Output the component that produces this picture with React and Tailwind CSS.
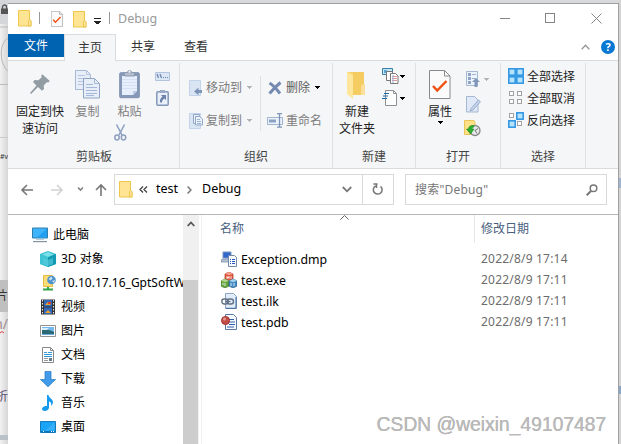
import React from "react";

const UI = "font-['Noto_Sans','Noto_Sans_CJK_SC',sans-serif]";

function Caret({ className = "text-black" }) {
  return (
    <svg className={`block shrink-0 ${className}`} width="5" height="3" viewBox="0 0 5 3" shapeRendering="crispEdges">
      <path d="M0 0h5v1H0zM1 1h3v1H1zM2 2h1v1H2z" fill="currentColor" />
    </svg>
  );
}

function Folder({ w = 14, h = 17 }) {
  return (
    <svg className="block shrink-0" width={w} height={h} viewBox="0 0 14 17">
      <path d="M.5.5h11v9.5l1.5 1v5H.5z" fill="#ffe494" stroke="#eec64b" />
      <path d="M10.5 16V10.5l1.2-1 1.3 1V16z" fill="#ffe89e" stroke="#e9bd3d" strokeWidth=".8" />
    </svg>
  );
}

function PinIcon() {
  return (
    <svg className="block" width="20" height="20" viewBox="0 0 20 20">
      <path d="M12.3.3 19.8 7l-1.600 1.400-1.500-.2-3 3.300.3 3.600-2 1.700L8 13 1 20l-1-.9L6.500 11.500 3 8l1.600-2 3.800.300 3.300-3-.5-1.500z" fill="#929ca3" />
    </svg>
  );
}

function CopyIcon() {
  return (
    <svg className="block" width="25" height="29" viewBox="0 0 25 29">
      <path d="M.5.5h11l4 4v15H.5z" fill="#e8eef8" stroke="#a6b8d3" />
      <path d="M11.5.5v4h4M3 5.5h7M3 8.5h10M3 11.500h10M3 14.500h8" fill="none" stroke="#b4c6e1" />
      <path d="M8.500 8.500h11l5 5v14.500h-16z" fill="#e8eef8" stroke="#8fa4c4" />
      <path d="M19.500 8.500v5h5M11 14.500h7M11 17.500h11M11 20.500h11M11 23.500h11M11 25.500h8" fill="none" stroke="#a4b9da" />
    </svg>
  );
}

function PasteIcon() {
  return (
    <svg className="block" width="21" height="30" viewBox="0 0 21 30">
      <rect x=".7" y="3.700" width="19.600" height="25" rx="1" fill="#8799b8" stroke="#8092b1" />
      <path d="M3 7h15v15l-4 4H3z" fill="#e6effb" />
      <path d="M3 10.500h15M3 13.500h15M3 16.500h15M3 19.500h15" stroke="#d5e1f2" />
      <path d="M14 26v-4h4z" fill="#bccce5" />
      <path d="M5.500 7V3.500h3a2 2 0 0 1 4 0h3V7z" fill="#b5bdcc" stroke="#8998b3" />
      <circle cx="10.500" cy="2.500" r="1" fill="#f5f6f8" />
    </svg>
  );
}

function ScissorsIcon() {
  return (
    <svg className="block" width="13" height="17" viewBox="0 0 13 17" fill="none" stroke="#8da0c1">
      <path d="M2.500.5 8 11M10.500.5 5 11" strokeWidth="1.600" />
      <ellipse cx="3" cy="13.500" rx="2.200" ry="2.400" strokeWidth="1.500" />
      <ellipse cx="9.500" cy="13.500" rx="2.200" ry="2.400" strokeWidth="1.500" />
    </svg>
  );
}

function PathIcon() {
  return (
    <svg className="block" width="15" height="9" viewBox="0 0 15 9">
      <path d="M.5.5h14v8H.5z" fill="#dce7f6" stroke="#b2c3de" />
      <path d="m2 2 1.500 4M5 2l1.500 4" stroke="#6f86ad" strokeWidth="1.300" />
      <path d="M8 5h1v1H8zM10 5h1v1h-1zM12 5h1v1h-1z" fill="#6f86ad" />
    </svg>
  );
}

function PasteLinkIcon() {
  return (
    <svg className="block" width="13" height="16" viewBox="0 0 13 16">
      <rect x=".8" y="1.800" width="11.400" height="13.400" rx="1" fill="#e9f0fa" stroke="#8498b9" strokeWidth="1.500" />
      <path d="M4 0h5v3H4z" fill="#9aaac6" />
      <path d="M5 5h5v5L8.300 8.400C6.500 9.500 6 11 6 12.500H4C3.500 10 4.500 8 6.500 6.700z" fill="#6c83ab" />
    </svg>
  );
}

function MoveIcon() {
  return (
    <svg className="block shrink-0" width="14" height="16" viewBox="0 0 14 16">
      <path d="M.5.5h11v15H.5z" fill="#dae5f4" stroke="#c3d3ea" />
      <path d="M13 10H9.500V7.500L5 11.500l4.500 3.800V13H13z" fill="#7e95ba" />
    </svg>
  );
}

function CopyToIcon() {
  return (
    <svg className="block shrink-0" width="14" height="16" viewBox="0 0 14 16">
      <path d="M.5.5h11v15H.5z" fill="#dae5f4" stroke="#c3d3ea" />
      <path d="M4.500 1.500h6v9h-6z" fill="#eaf1fa" stroke="#93a8c9" />
      <path d="M6.500 3.500h4l3 2.500v6h-7z" fill="#edf3fb" stroke="#93a8c9" />
      <path d="M8 6.500h3M8 8.500h4M8 10.500h4" stroke="#9db1d0" />
    </svg>
  );
}

function DeleteIcon() {
  return (
    <svg className="block shrink-0" width="14" height="14" viewBox="0 0 14 14">
      <path d="M1.500 2C4 3.500 8.500 8 12 12.500M12.500 1.500C9.500 4 5 8.500 1.500 12.500" fill="none" stroke="#748ab0" strokeWidth="3" />
    </svg>
  );
}

function RenameIcon() {
  return (
    <svg className="block shrink-0" width="16" height="15" viewBox="0 0 16 15">
      <path d="M.5 4.500h15v7H.5z" fill="#edf3fb" stroke="#a0b3d0" />
      <path d="M2 6.500h7v3H2z" fill="#8ba0c3" />
      <path d="M10 .7h5M12.500.7v13.500M10 14.200h5" fill="none" stroke="#7e94b9" strokeWidth="1.300" />
    </svg>
  );
}

function NewFolderIcon() {
  return (
    <svg className="block" width="20" height="28" viewBox="0 0 20 28">
      <path d="M3 1h14v12l1 1v10H6L0 21V1z" fill="#f7d168" />
      <path d="M0 1l6 3v24l-6-5z" fill="#ffe69d" />
      <path d="M6 4V1h11v13l1 1v9H6z" fill="#f5cc62" />
      <path d="M14 24V15l2-2 2 2v9z" fill="#fae09a" />
    </svg>
  );
}

function NewItemIcon() {
  return (
    <svg className="block shrink-0" width="17" height="16" viewBox="0 0 17 16">
      <path d="M.5.500h10v6H.5z" fill="#c5e9f9" stroke="#397eaa" />
      <path d="M2 2h3v3H2z" fill="#5aa5d6" />
      <path d="M4.500 3.500h6v9h-6z" fill="#fff" stroke="#777" />
      <path d="M8.500 5.500h5l2.500 2.500v7.500H8.500z" fill="#fff" stroke="#777" />
      <path d="M10 8.500h5M10 10.500h5M10 12.500h5" stroke="#e69a9a" />
      <path d="M11 7v8" stroke="#8dafd8" />
    </svg>
  );
}

function EasyAccessIcon() {
  return (
    <svg className="block shrink-0" width="17" height="16" viewBox="0 0 17 16">
      <path d="M3.500.500h8l3 3v12h-11z" fill="#fff" stroke="#909090" />
      <path d="M11.500.500v3h3" fill="none" stroke="#909090" />
      <path d="M2 3.500h5M1 6h5M0 8.500h5" stroke="#1b6cab" strokeWidth="1.200" />
    </svg>
  );
}

function PropertiesIcon({ w = 22, h = 29 }) {
  return (
    <svg className="block shrink-0" width={w} height={h} viewBox="0 0 22 29">
      <path d="M.5.500h15l5.500 5.500v22.500H.5z" fill="#fbfbfb" stroke="#8a8a8a" />
      <path d="M15.500.500v5.500H21" fill="none" stroke="#8a8a8a" />
      <path d="m4 16 4.200 4.500 9.300-9.500" fill="none" stroke="#f05010" strokeWidth="2.500" />
    </svg>
  );
}

function OpenIcon() {
  return (
    <svg className="block shrink-0" width="14" height="16" viewBox="0 0 14 16">
      <path d="M.5.500h11v14H.5z" fill="#edf3fb" stroke="#a5b7d2" />
      <path d="M2 2h3v3H2zM2 6h3v3H2zM2 10h3v3H2z" fill="#8fa4c6" />
      <path d="M6 3.500h4M6 7.500h4" stroke="#9fb2cf" />
      <path d="m10 7 4 4h-2.500v5h-3v-5H6z" fill="#8096ba" />
    </svg>
  );
}

function EditIcon() {
  return (
    <svg className="block" width="15" height="17" viewBox="0 0 15 17">
      <path d="M.5.500h8l3.500 3.500v12H.5z" fill="#dfe9f7" stroke="#a5b7d2" />
      <path d="m5 12.500 7.500-8.500 2 1.700L7 14l-3 1z" fill="#c4d3e9" stroke="#8fa4c5" strokeWidth=".8" />
    </svg>
  );
}

function HistoryIcon() {
  return (
    <svg className="block" width="17" height="17" viewBox="0 0 17 17">
      <path d="M.5.500h9.500l1 2v12H.5z" fill="#ffe287" stroke="#eac456" />
      <circle cx="11" cy="10.500" r="5" fill="#e8e9eb" stroke="#888" strokeWidth="1.300" />
      <path d="M11 10.500l3-2M11 10.500l2 3" stroke="#555" strokeWidth=".8" />
      <path d="M9.500 5.500C6 5 4.500 7 4.500 9H2.500l4 5 3.500-5H8c0-1.300.700-2 2-2z" fill="#31ae31" stroke="#158b18" strokeWidth=".6" />
    </svg>
  );
}

const SELECTED = { all: [1, 1, 1, 1], none: [0, 0, 0, 0], invert: [0, 1, 1, 0] };
function SelectIcon({ kind }) {
  const pos = [[1, 1], [9, 1], [1, 9], [9, 9]];
  return (
    <svg className="block shrink-0" width="16" height="16" viewBox="0 0 16 16">
      {pos.map(([x, y], i) =>
        SELECTED[kind][i] ? (
          <rect key={i} x={x - 0.2} y={y - 0.2} width="6.400" height="6.400" fill="#b7e2fc" stroke="#2a94e3" strokeWidth="1.500" />
        ) : (
          <rect key={i} x={x + 0.5} y={y + 0.5} width="4" height="4" fill="#fff" stroke="#a2a2a2" />
        )
      )}
    </svg>
  );
}

function Group({ label, width, children }) {
  return (
    <div className={`flex h-[105px] shrink-0 flex-col border-r border-[#dfe0e2] ${width}`}>
      <div className="flex h-[85px] items-start">{children}</div>
      <div className="h-[17px] text-center leading-[17px] text-[#444]">{label}</div>
    </div>
  );
}

function Ribbon() {
  return (
    <div className="flex h-[109px] shrink-0 border-y border-[#dadbdc] bg-[#f5f6f8] pl-px pt-[2px] leading-[17px] text-[#222]">
      <Group label="剪贴板" width="w-[171px]">
        <div className="flex w-[62px] flex-col items-center pt-[11px]">
          <PinIcon />
          <div className="mt-[9px] text-center">固定到快<br />速访问</div>
        </div>
        <div className="flex w-[33px] flex-col items-center pt-[7px] text-[#808080]">
          <CopyIcon />
          <div className="mt-1">复制</div>
        </div>
        <div className="flex w-[51px] flex-col items-center pt-[6px] text-[#808080]">
          <PasteIcon />
          <div className="mt-1">粘贴</div>
          <div className="mr-[18px] mt-1"><ScissorsIcon /></div>
        </div>
        <div className="flex flex-col items-center gap-[9px] pt-[9px]">
          <PathIcon />
          <PasteLinkIcon />
        </div>
      </Group>
      <Group label="组织" width="w-[153px]">
        <div className="flex w-[80px] flex-col gap-[16px] pl-[9px] pt-4 text-[#7c7c7c]">
          <div className="flex h-[17px] items-center"><MoveIcon /><span className="ml-[3px] mr-[5px]">移动到</span><Caret className="text-[#b4b4b4]" /></div>
          <div className="flex h-[17px] items-center"><CopyToIcon /><span className="ml-[3px] mr-[5px]">复制到</span><Caret className="text-[#b4b4b4]" /></div>
        </div>
        <div className="mt-[13px] h-[55px] w-px bg-[#dfe0e2]" />
        <div className="flex flex-col gap-[16px] pl-[6px] pt-4 text-[#7c7c7c]">
          <div className="flex h-[17px] items-center pl-px"><DeleteIcon /><span className="ml-[4px] mr-[5px] text-[#606060]">删除</span><Caret /></div>
          <div className="flex h-[17px] items-center"><RenameIcon /><span className="ml-[3px]">重命名</span></div>
        </div>
      </Group>
      <Group label="新建" width="w-[83px]">
        <div className="flex w-[48px] flex-col items-center pt-[8px]">
          <NewFolderIcon />
          <div className="mt-[4px] whitespace-nowrap text-center">新建<br />文件夹</div>
        </div>
        <div className="flex flex-col gap-[6px] pl-px pt-[5px]">
          <div className="flex items-center gap-[1px]"><NewItemIcon /><Caret /></div>
          <div className="flex items-center gap-[1px]"><EasyAccessIcon /><Caret /></div>
        </div>
      </Group>
      <Group label="打开" width="w-[85px]">
        <div className="flex w-[48px] flex-col items-center pt-[7px]">
          <PropertiesIcon />
          <div className="mb-[1px] mt-[4px]">属性</div>
          <Caret />
        </div>
        <div className="flex flex-col gap-[9px] pl-[2px] pt-[8px]">
          <div className="flex items-center gap-[4px]"><OpenIcon /><Caret className="text-[#b4b4b4]" /></div>
          <EditIcon />
          <div className="-ml-[2px] -mt-[2px]"><HistoryIcon /></div>
        </div>
      </Group>
      <Group label="选择" width="w-[85px]">
        <div className="flex flex-col gap-[6px] pl-[7px] pt-[5px]">
          <div className="flex h-4 items-center gap-[3px]"><SelectIcon kind="all" />全部选择</div>
          <div className="flex h-4 items-center gap-[3px]"><SelectIcon kind="none" />全部取消</div>
          <div className="flex h-4 items-center gap-[3px]"><SelectIcon kind="invert" />反向选择</div>
        </div>
      </Group>
    </div>
  );
}

function TitleBar() {
  return (
    <div className="flex h-[30px] shrink-0 items-center pl-[10px] pr-[11px]">
      <span className="-mt-[2px]"><Folder /></span>
      <span className="-mt-[2px] ml-[7px] h-[12px] w-px bg-[#999]" />
      <span className="ml-[11px]"><PropertiesIcon w={12} h={16} /></span>
      <span className="ml-[10px]"><Folder /></span>
      <svg className="ml-[7px] mt-1 block" width="8" height="7" viewBox="0 0 8 7" shapeRendering="crispEdges">
        <path d="M0 0h7v1H0zM0 3h7v1H0zM1 4h5v1H1zM2 5h3v1H2z" fill="#222" />
      </svg>
      <span className="-mt-[2px] ml-[7px] h-[12px] w-px bg-[#999]" />
      <span className="ml-[8px] text-[12.500px] text-[#999]">Debug</span>
      <div className="-mt-[1px] ml-auto flex items-center text-[#858585]">
        <svg className="block" width="110" height="12" viewBox="0 0 110 12" fill="none" stroke="currentColor">
          <path d="M3 5.500h10M48.500.500h9v9h-9z" shapeRendering="crispEdges" />
          <path d="m94.500.500 10 10M104.500.500l-10 10" />
        </svg>
      </div>
    </div>
  );
}

function Tabs() {
  return (
    <div className="flex h-[26px] shrink-0 text-[#333]">
      <div className="h-[23px] w-[56px] bg-[#0063b1] text-center leading-[23px] text-white">文件</div>
      <div className="z-10 h-[27px] w-[52px] border-x border-t border-[#dadbdc] bg-[#f5f6f8] text-center leading-[25px]">主页</div>
      <div className="ml-[15px] leading-[25px]">共享</div>
      <div className="ml-[29px] leading-[25px]">查看</div>
      <div className="ml-auto flex items-center pr-[3px]">
        <svg className="mr-[11px] block" width="9" height="6" viewBox="0 0 9 6"><path d="m.700 5.200 3.800-4 3.800 4" fill="none" stroke="#999" strokeWidth="1.400" /></svg>
        <div className="flex size-[14px] items-center justify-center rounded-full bg-[#0878d2] text-[11px] font-bold text-white">?</div>
      </div>
    </div>
  );
}

function AddressBar() {
  return (
    <div className="flex h-[45px] shrink-0 items-start pl-[12px] pt-[5px]">
      <svg className="mt-[9px] block" width="88" height="14" viewBox="0 0 88 14" fill="none" strokeWidth="1.600">
        <path d="M13 7H2M7 2 2 7l5 5" stroke="#777" />
        <path d="M31 7h11M37 2l5 5-5 5" stroke="#d2d2d2" />
        <path d="m58 4.500 2.500 2.500L63 4.500" stroke="#808080" />
        <path d="M81 13V2M76 7l5-5 5 5" stroke="#777" />
      </svg>
      <div className="ml-[6px] flex h-[31px] w-[280px] items-center border border-[#d9d9d9]">
        <div className="flex h-full w-[248px] items-center border-r border-[#d9d9d9] pl-[4px] text-[12.500px] text-black">
          <Folder />
          <svg className="ml-[6px] block" width="9" height="7" viewBox="0 0 9 7" fill="none" stroke="#444" strokeWidth="1.300"><path d="M4 .500 1 3.500l3 3M8 .500 5 3.500l3 3" /></svg>
          <span className="ml-[8px] w-[22px]">test</span>
          <svg className="ml-[9px] block" width="5" height="8" viewBox="0 0 5 8" fill="none" stroke="#777" strokeWidth="1.500"><path d="m.600.600 3.300 3.400L.600 7.400" /></svg>
          <span className="ml-[10px]">Debug</span>
          <svg className="ml-auto mr-[10px] block" width="10" height="7" viewBox="0 0 10 7" fill="none" stroke="#777" strokeWidth="1.800"><path d="m.800 1 4.200 4.300L9.200 1" /></svg>
        </div>
        <svg className="mx-auto block" width="12" height="13" viewBox="0 0 12 13" fill="none" stroke="#777" strokeWidth="1.500"><path d="M8.500 3.300a4.400 4.400 0 1 1-4.800-.500M5.500 1h-4M4.500.500v4.500" /></svg>
      </div>
      <div className="ml-[11px] flex h-[31px] w-[202px] items-center border border-[#d9d9d9] pl-[9px] pr-[8px] text-[#777]">
        <span className="tracking-[0.2px]">搜索"Debug"</span>
        <svg className="ml-auto block" width="12" height="12" viewBox="0 0 12 12" fill="none" stroke="#777"><circle cx="7.500" cy="4.300" r="3.300" strokeWidth="1.500" /><path d="m5 7-4.300 4.300" strokeWidth="2" /></svg>
      </div>
    </div>
  );
}

const NAV_ICONS = {
  pc: (<><path d="M.5 1h15v10H.5z" fill="#40b4fa" stroke="#2e7eae" /><path d="M15 1.500V10.500H5z" fill="#229ff0" /><path d="M4 12h8v1H4z" fill="#b9cedb" /><path d="M1 14h14v1.200H1z" fill="#7d97a8" /></>),
  cube: (<><path d="m0 3 8-3 8 3v10l-8 3-8-3z" fill="#31b9cd" /><path d="m0 3 8 3v10l-8-3z" fill="#3cc4d5" /><path d="m8 6 8-3v10l-8 3z" fill="#139bb3" /><path d="m2 3.500 6-2.500 6 2.500L8 6z" fill="#7ae0e8" /><path d="m3 7 5 2 5-2v6l-5 2-5-2z" fill="#5ccddd" opacity=".6" /></>),
  net: (<><path d="M3.500.500h9v11h-9z" fill="#fbdc76" stroke="#e5bb45" /><circle cx="11.500" cy="5" r="4.300" fill="#4e92cd" /><path d="m8.500 4 3-2.500 1 2-2 2zM12 6l3-1-1 3z" fill="#c7e2ee" /><path d="M8 12v3M3 14.500h10" stroke="#30a548" strokeWidth="2" /></>),
  video: (<><path d="M1 .5h14v15H1z" fill="#333" /><path d="M4 1h8v6.500H4zM4 8.500h8V15H4z" fill="#3369b8" /><path d="m5 6 3-3 3 3zM5 14l3-3 3 3z" fill="#f0a329" /><path d="M8 3h3v2H8z" fill="#d7442b" /><path d="M2.500 1v14M13.500 1v14" stroke="#eee" strokeDasharray="1.500 1.500" /></>),
  image: (<><path d="M.5 2.500h15v11H.5z" fill="#fff" stroke="#929292" /><path d="M2 4h12v8H2z" fill="#75b8ec" /><path d="M2 6c3 2 5-1 12 3v3H2z" fill="#2b6975" /><path d="M2 5h7l-2 2H2z" fill="#d5eefc" /><path d="M2 11h12v1H2z" fill="#6daee0" /></>),
  doc: (<><path d="M2.500.500h8l3 3v12h-11z" fill="#fff" stroke="#888" /><path d="M10.500.500v3h3" fill="none" stroke="#888" /><path d="M4 5.500h3M8 5.500h4M4 7.500h8M4 9.500h8" stroke="#2e99d6" /><path d="M4 11.500h4M4 13.500h4" stroke="#999" /><path d="M9 11h3v3H9z" fill="#687b8a" /></>),
  down: <path d="M5 .5h6v8h4.500L8 15.700.500 8.500H5z" fill="#419be9" stroke="#2c7fc8" strokeWidth=".8" />,
  music: <path d="M7 0h1.500c.3 3 4.500 4 4.500 7 0 1.500-1 3-2 4 .6-2.500 0-4-2-4.500V13c-.5 2-2.500 3-4 3-1.500 0-3-.7-3-2 0-2 2.500-3.500 5-3z" fill="#159aee" />,
  desk: (<><path d="M.5 2.500h15v11H.5z" fill="#1ba4f5" stroke="#147ab8" /><path d="M14.500 3v8L5 12z" fill="#36b0fb" /><path d="M1 12h14v1.500H1z" fill="#0874ba" /><path d="M3 12.500h1M11 12.500h1M13 12.500h1" stroke="#fff" /></>),
};

const NAV = [
  ["cube", "3D 对象"],
  ["net", "10.10.17.16_GptSoftWare"],
  ["video", "视频"],
  ["image", "图片"],
  ["doc", "文档"],
  ["down", "下载"],
  ["music", "音乐"],
  ["desk", "桌面"],
];

function NavRow({ icon, label, indent }) {
  return (
    <div className={`flex h-6 shrink-0 items-center whitespace-nowrap text-black ${indent}`}>
      <svg className="block shrink-0" width="16" height="16" viewBox="0 0 16 16">{NAV_ICONS[icon]}</svg>
      <span className="ml-[5px]">{label}</span>
    </div>
  );
}

function Sidebar() {
  return (
    <div className="flex w-[194px] shrink-0 border-r border-[#f0f0f0]">
      <div className="w-[175px] overflow-hidden pt-[8px]">
        <NavRow icon="pc" label="此电脑" indent="pl-[24px]" />
        {NAV.map(([icon, label]) => <NavRow key={icon} icon={icon} label={label} indent="pl-[32px]" />)}
      </div>
      <div className="flex w-[16px] flex-col bg-[#f0f0f0]">
        <svg className="ml-[4px] mt-[6px] block" width="8" height="6" viewBox="0 0 8 6" fill="none" stroke="#555" strokeWidth="1.800"><path d="M.7 5 4 1.500 7.300 5" /></svg>
        <div className="mt-[53px] w-[15px] flex-1 bg-[#cdcdcd]" />
      </div>
    </div>
  );
}

const FILE_ICONS = {
  dmp: (<><path d="M2 1h8v6H2z" fill="#3268cd" stroke="#7994c1" /><path d="m1 8h8l1 3H0z" fill="#b5c2d5" stroke="#7588a5" strokeWidth=".7" /><path d="M7.500 4.500h6l2 2v9h-8z" fill="#f7faff" stroke="#7187a7" /><path d="M9 8.500h1M11 8.500h3M9 10.500h1M11 10.500h3M9 12.500h1M11 12.500h3" stroke="#2759bd" /></>),
  exe: (<><path d="m4 2 4-2 4 2v6L8 9 4 7z" fill="#e2583c" stroke="#a93621" strokeWidth=".7" /><path d="m4 2 4 1 4-1-4-2z" fill="#f5a594" /><path d="m0 9 4-2 4 2v5l-4 2-4-2z" fill="#65a63f" stroke="#3f792a" strokeWidth=".7" /><path d="m0 9 4 1 4-1-4-2z" fill="#b7d991" /><path d="m8 9 4-2 4 2v5l-4 2-4-2z" fill="#448bc2" stroke="#245c8b" strokeWidth=".7" /><path d="m8 9 4 1 4-1-4-2z" fill="#a7d5ef" /><path d="M6 4v3M6 5.500h2M8 4v3M10 4v3M2 11v2M4 11v3M10 11v3M13 11v3" stroke="#fff" strokeWidth=".8" /></>),
  ilk: (<><path d="M4.500.500h8l3 3v12h-11z" fill="#e1edfb" stroke="#8fa4c0" /><path d="M15 4v11.300H5" fill="none" stroke="#3c6899" /><g fill="none" stroke="#627183" strokeWidth="1.400"><rect x=".8" y="6" width="6.500" height="5" rx="2.500" /><rect x="6" y="6" width="6.500" height="5" rx="2.500" /></g><path d="M4 8.500h5.500" stroke="#627183" strokeWidth="1.200" /></>),
  pdb: (<><path d="M4.500.500h8l3 3v12h-11z" fill="#f6f9ff" stroke="#5a78a6" /><path d="M8 5.500h5M8 8h6M8 10.500h6M6 13h7" stroke="#325fa9" strokeWidth="1.200" /><circle cx="4.500" cy="6.500" r="4" fill="#c24c47" stroke="#a5312d" /><circle cx="3.500" cy="5" r="1.500" fill="#e59993" /></>),
};

const FILES = [
  ["dmp", "Exception.dmp", "2022/8/9 17:14"],
  ["exe", "test.exe", "2022/8/9 17:11"],
  ["ilk", "test.ilk", "2022/8/9 17:11"],
  ["pdb", "test.pdb", "2022/8/9 17:11"],
];

function FileList() {
  return (
    <div className="relative flex-1 pl-[18px]">
      <svg className="absolute left-[138px] top-0 block" width="9" height="5" viewBox="0 0 9 5" fill="none" stroke="#666"><path d="m.500 4.500 4-4 4 4" /></svg>
      <div className="flex h-[28px] text-[#49617e]">
        <div className="w-[255px] border-r border-[#e5e5e5] leading-[28px]">名称</div>
        <div className="pl-[6px] leading-[28px]">修改日期</div>
      </div>
      <div className="pt-[5px]">
        {FILES.map(([icon, name, date]) => (
          <div key={name} className="flex h-[21px] items-center whitespace-nowrap">
            <svg className="ml-px block shrink-0" width="16" height="16" viewBox="0 0 16 16">{FILE_ICONS[icon]}</svg>
            <span className="ml-[4px] w-[240px] pt-[2px] text-[12.300px] leading-[19px] text-black">{name}</span>
            <span className="tracking-[0.200px] text-[#6d6d6d]">{date}</span>
          </div>
        ))}
      </div>
      <div className="absolute bottom-[6px] right-[12px] whitespace-nowrap font-['Liberation_Sans',sans-serif] text-[19.300px] leading-[26px] text-[#bababa] [text-shadow:0.3px_0.4px_0_#aaa]">CSDN @weixin_49107487</div>
    </div>
  );
}

function LeftBackdrop() {
  return (
    <div className="flex w-[8px] shrink-0 flex-col overflow-hidden bg-gradient-to-r from-[#f2f2f2] to-[#d6d6d6] text-[12px]">
      <div className="h-[24px] shrink-0 bg-[#d5d6d9] pt-[4px]">
        <svg className="block" width="8" height="10" viewBox="0 0 8 10"><path d="M2.500 5V3a2 2 0 0 1 4 0v2" fill="none" stroke="#555" strokeWidth="1.300" /><path d="M1 4.500h7V10H1z" fill="#555" /></svg>
      </div>
      <svg className="block shrink-0" width="8" height="61" viewBox="0 0 8 61"><path d="M0 3h8M0 60.500h8" stroke="#bbb" /><path d="M8 14C-1 19-1 40 8 47" fill="none" stroke="#b5b5b5" /></svg>
      <div className="mt-[52px] h-px shrink-0 bg-[#ccc]" />
      <div className="mt-[9px] h-[20px] shrink-0 text-[7px] leading-[20px] text-[#333]">#v</div>
      <div className="mt-[113px] flex h-[32px] shrink-0 items-center justify-end bg-[#bfbfbf] text-[#333]">片</div>
      <div className="flex h-[26px] shrink-0 flex-col">
        <span className="flex h-[19px] justify-end text-[14px] leading-[24px] text-[#a08c8c]">n/</span>
        <svg className="block shrink-0" width="8" height="3" viewBox="0 0 8 3"><path d="m0 2 2-1.500L4 2" fill="none" stroke="#e04040" /></svg>
      </div>
      <div className="mt-[49px] flex h-[20px] shrink-0 justify-end leading-[20px] text-[#55476f]">折</div>
      <div className="mt-[28px] h-[5px] shrink-0 bg-[#b9c2c8]" />
    </div>
  );
}

export default function App() {
  return (
    <div className={`flex h-[444px] w-[621px] overflow-hidden bg-[#d7d8da] text-[12px] ${UI}`}>
      <LeftBackdrop />
      <div className="flex w-[611px] shrink-0 flex-col">
        <div className="h-[3px] bg-[#d8d9dc]" />
        <div className="flex h-[441px] flex-col border-r border-t border-[#a0a0a0] bg-white">
          <TitleBar />
          <Tabs />
          <Ribbon />
          <AddressBar />
          <div className="flex h-[230px] border-t border-[#b6b6b6]">
            <Sidebar />
            <FileList />
          </div>
        </div>
      </div>
      <div className="flex flex-1 flex-col bg-[#d4d4d4]">
        <div className="mt-[178px] h-[10px] bg-[#9eb4cf]" />
        <div className="mt-[198px] h-[8px] bg-[#8ba6c4]" />
      </div>
    </div>
  );
}
